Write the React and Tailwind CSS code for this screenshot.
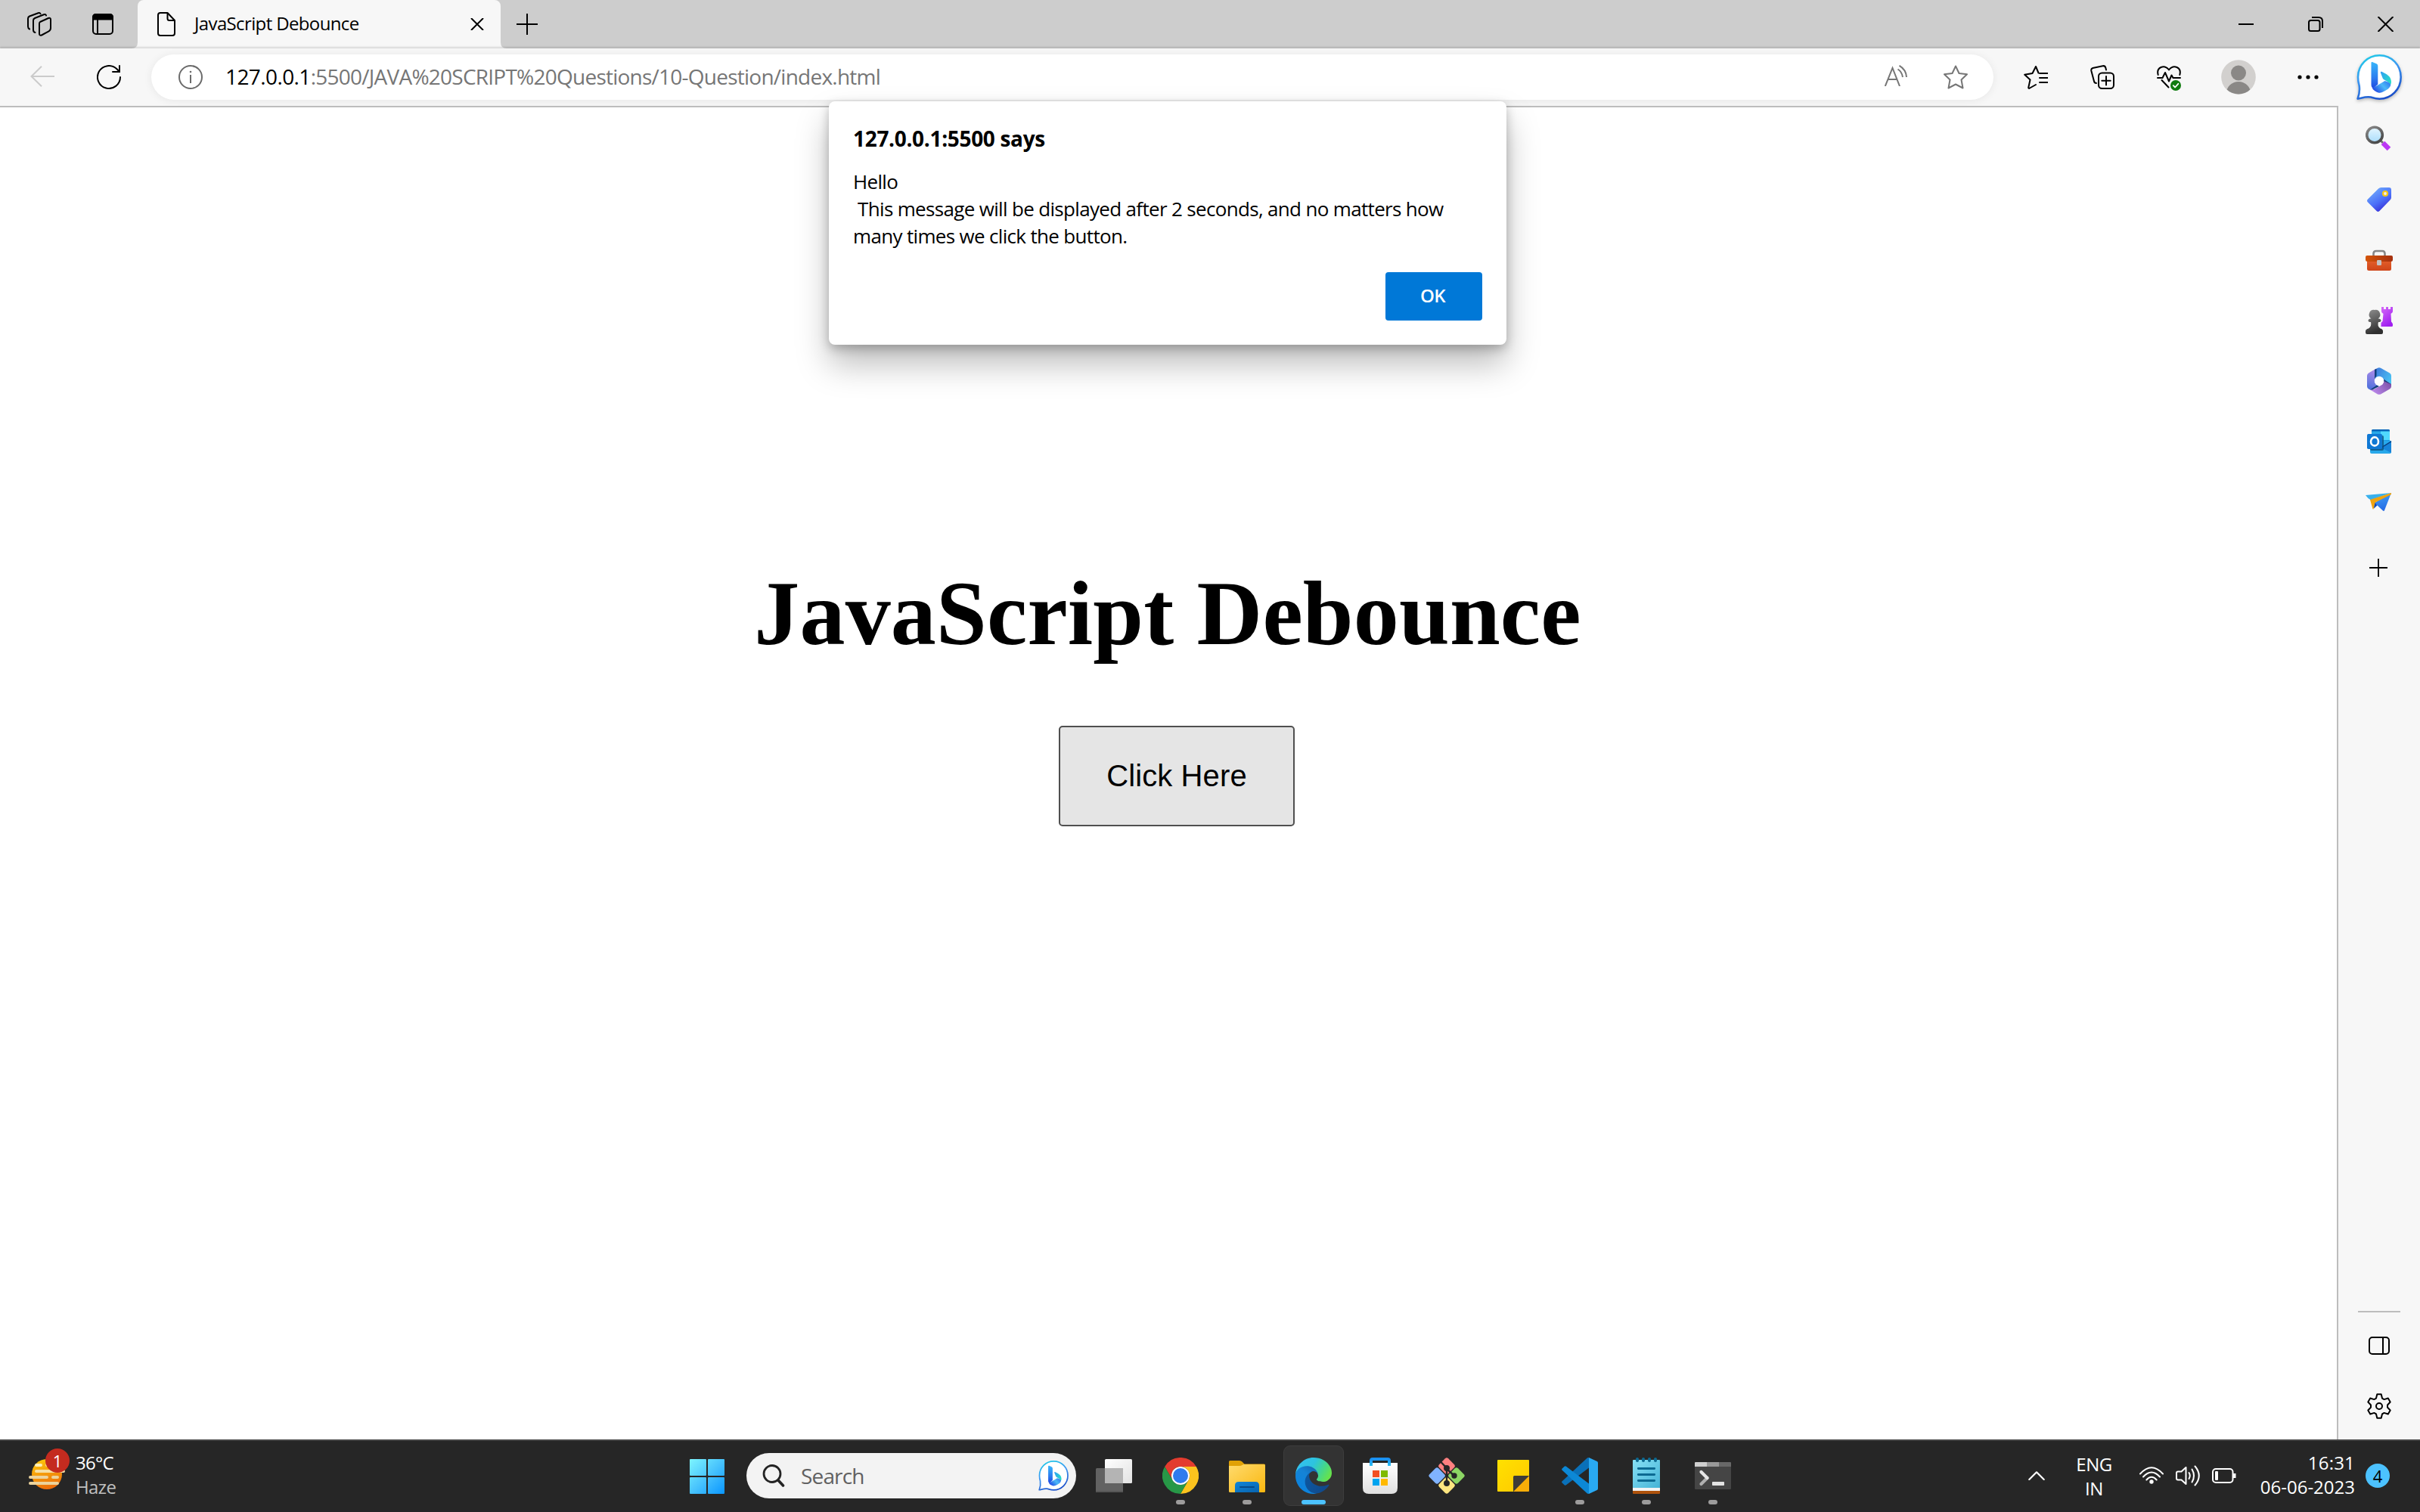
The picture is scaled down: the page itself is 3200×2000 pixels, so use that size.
const UI = "font-['Open_Sans',sans-serif]";

/* ---------- shared logo ---------- */
function BingLogo({ id, className }) {
  return (
    <svg viewBox="0 0 60 62" className={className}>
      <defs>
        <linearGradient id={`${id}-ring`} x1="0.2" y1="0" x2="0.6" y2="1">
          <stop offset="0" stopColor="#1fcbe8" />
          <stop offset="0.45" stopColor="#3d97f2" />
          <stop offset="1" stopColor="#1a4fc9" />
        </linearGradient>
        <linearGradient id={`${id}-stem`} x1="0" y1="0" x2="0" y2="1">
          <stop offset="0" stopColor="#37b5fa" />
          <stop offset="0.6" stopColor="#2b7cf0" />
          <stop offset="1" stopColor="#1f48e0" />
        </linearGradient>
        <linearGradient id={`${id}-leaf`} x1="0" y1="0" x2="1" y2="0.6">
          <stop offset="0" stopColor="#2f9df5" />
          <stop offset="1" stopColor="#27dcc8" />
        </linearGradient>
        <linearGradient id={`${id}-foot`} x1="0" y1="0.6" x2="1" y2="0">
          <stop offset="0" stopColor="#2350e6" />
          <stop offset="0.5" stopColor="#4cb9f7" />
          <stop offset="1" stopColor="#2a6bf0" />
        </linearGradient>
      </defs>
      <path
        d="M1.6 58.6 C4 52 4.4 46 3.6 41 C2.4 37 2 33.500 2 30 C2 14 14.500 1.300 30.500 1.300 S58.700 14 58.700 30 S46 58.700 30.500 58.700 C26 58.700 22.500 57.600 19 56.600 C13 55.300 7.500 57.500 1.600 58.600 Z"
        fill="#fff"
        stroke={`url(#${id}-ring)`}
        strokeWidth="2.600"
        strokeLinejoin="round"
      />
      <path d="M19.500 11.500 C19.500 10.300 20.300 9.800 21.500 10.300 L26.300 12.300 C27.700 13 28.300 14 28.300 15.800 V39.500 L22 45 C20.300 44 19.500 42.300 19.500 40 Z" fill={`url(#${id}-stem)`} />
      <path d="M32 24.500 C31.500 23 32.300 22.300 33.800 23 L39 25.700 C43.500 28.500 46 31.500 46 36.500 C46 38 45.500 39.500 44.500 40.500 C43.500 37.500 41.500 36 38.500 34.500 L36.300 33.300 C35.300 32.700 34.900 32 34.500 31 Z" fill={`url(#${id}-leaf)`} />
      <path d="M21 44.500 L28 40.800 L37.500 35 C41.500 36 44.300 37.800 45.300 40 C44.500 44 41.500 46 38 48 L34 50 C31 51.200 28.500 50.800 26 49.200 C23.500 47.800 21.500 46.500 21 44.500 Z" fill={`url(#${id}-foot)`} />
    </svg>
  );
}

/* ---------- tab strip ---------- */
function TabStrip() {
  return (
    <div className="flex h-16 items-center bg-[#cdcdcd] text-black">
      <svg className="ml-[36px] h-8 w-8 shrink-0" viewBox="0 0 32 32" fill="none" stroke="#000" strokeWidth="2" strokeLinejoin="round" strokeLinecap="round">
        <path d="M17 13 L28 8 Q31 7 31 10 V21 Q31 24 28.500 25.300 L19 30.500 Q16 31.500 16 28.500 V15.500 Q16 13.700 17 13 Z" />
        <path d="M10.500 27 Q8 26.500 8 23.500 V11 Q8 9 10 8 L22 3.200 Q24.500 2.500 25 4.500" />
        <path d="M3 22.500 Q1 21.500 1 19 V8.500 Q1 6.500 3 5.500 L14.500 1.200 Q17 0.500 17.500 2.300" />
      </svg>
      <svg className="ml-[54px] h-7 w-7 shrink-0" viewBox="0 0 28 28" fill="none" stroke="#000" strokeWidth="2">
        <rect x="1" y="1" width="26" height="26" rx="4" />
        <path d="M1 7.500 V5 Q1 1 5 1 H23 Q27 1 27 5 V7.500 Z" fill="#000" />
        <path d="M7 7 V27" />
      </svg>
      <svg className="ml-6 h-2 w-2 shrink-0 self-end" viewBox="0 0 8 8">
        <path d="M0 8 Q8 8 8 0 V8 Z" fill="#f7f7f7" />
      </svg>
      <div className="flex h-16 w-[480px] items-center rounded-t-[8px] bg-[#f7f7f7]">
        <svg className="ml-[26px] h-8 w-6 shrink-0" viewBox="0 0 24 32" fill="none" stroke="#000" strokeWidth="2" strokeLinejoin="round">
          <path d="M4 1 H13.500 L23 11 V28 Q23 31 20 31 H4 Q1 31 1 28 V4 Q1 1 4 1 Z" />
          <path d="M13.500 1 V8.500 Q13.500 11 16 11 H23" />
        </svg>
        <span className="ml-[25px] pb-[2px] text-[24px] tracking-[-0.63px] whitespace-nowrap">JavaScript Debounce</span>
        <svg className="mr-[22px] ml-auto h-4 w-[18px] shrink-0" viewBox="0 0 18 16" stroke="#000" strokeWidth="2">
          <path d="M1 0 L17 16 M17 0 L1 16" />
        </svg>
      </div>
      <svg className="h-2 w-2 shrink-0 self-end" viewBox="0 0 8 8">
        <path d="M8 8 Q0 8 0 0 V8 Z" fill="#f7f7f7" />
      </svg>
      <svg className="ml-[13px] h-7 w-7 shrink-0" viewBox="0 0 28 28" stroke="#000" strokeWidth="2">
        <path d="M14 0 V28 M0 14 H28" />
      </svg>
      <svg className="ml-auto h-5 w-5" viewBox="0 0 20 20">
        <path d="M0 10 H20" stroke="#000" strokeWidth="2" />
      </svg>
      <svg className="ml-[72px] h-5 w-5" viewBox="0 0 20 20" fill="none" stroke="#000" strokeWidth="2">
        <rect x="1" y="5" width="14.500" height="14" rx="2.500" />
        <path d="M5 1 H14 Q19 1 19 6 V15" />
      </svg>
      <svg className="mr-[35px] ml-[72px] h-5 w-[21px]" viewBox="0 0 21 20" stroke="#000" strokeWidth="2">
        <path d="M0.500 0 L20.500 20 M20.500 0 L0.500 20" />
      </svg>
    </div>
  );
}

/* ---------- toolbar ---------- */
function Toolbar() {
  return (
    <div className="flex h-[76px] items-center bg-[#f7f7f7] shadow-[0_-2px_2px_rgba(0,0,0,0.12)]">
      <svg className="ml-[40px] h-7 w-8 shrink-0 -translate-y-px" viewBox="0 0 32 28" fill="none" stroke="#cbcbcb" strokeWidth="2">
        <path d="M15 0.700 L1.500 14 L15 27.300 M1.500 14 H32" />
      </svg>
      <svg className="ml-[56px] h-8 w-8 shrink-0" viewBox="0 0 32 32" fill="none" stroke="#000" strokeWidth="2" strokeLinecap="round">
        <path d="M31 16 A15 15 0 1 1 26.500 5.300 L30 9" />
        <path d="M30 1 V9 H21" />
      </svg>
      <div className="ml-[40px] flex h-[60px] w-[2436px] shrink-0 items-center rounded-full bg-white shadow-[0_1px_12px_rgba(0,0,0,0.07)]">
        <svg className="ml-[36px] h-8 w-8 shrink-0" viewBox="0 0 32 32" fill="none" stroke="#6b6b6b" strokeWidth="2">
          <circle cx="16" cy="16" r="15" />
          <path d="M16 13 V24" />
          <circle cx="16" cy="9" r="1.300" fill="#6b6b6b" stroke="none" />
        </svg>
        <span className="ml-[30px] pb-[2px] text-[28px] whitespace-nowrap text-[#767676]">
          <span className="tracking-[-0.6px] text-black">127.0.0.1</span>
          <span className="tracking-[-0.76px]">:5500/JAVA%20SCRIPT%20Questions/10-Question/index.html</span>
        </span>
        <svg className="mr-[48px] ml-auto h-7 w-[30px] shrink-0 -translate-y-[2px]" viewBox="0 0 30 28" fill="none" stroke="#767676" strokeWidth="2">
          <path d="M0.800 28 L10.500 4 L20 28 M4.500 19 H16.500" />
          <path d="M17.500 5.500 Q23 9 24 16" />
          <path d="M19.500 0.800 Q28.500 6 29 16" />
        </svg>
        <svg className="mr-[34px] h-8 w-8 shrink-0" viewBox="0 0 32 32" fill="none" stroke="#767676" strokeWidth="2" strokeLinejoin="round">
          <path d="M16 1.500 L20.500 11 L31 12.300 L23.500 19.500 L25.500 30.500 L16 25.500 L6.500 30.500 L8.500 19.500 L1 12.300 L11.500 11 Z" />
        </svg>
      </div>
      <svg className="ml-[40px] h-8 w-8 shrink-0" viewBox="0 0 32 32" fill="none" stroke="#000" strokeWidth="2" strokeLinejoin="round" strokeLinecap="round">
        <path d="M19.500 10.500 L16 2 L11.500 11 L1.200 12.800 L8.500 19.500 L6.200 30 Q6.500 31.500 8 30.500 L16 26" />
        <path d="M21 11 H31.500 M21 17 H31.500 M21 23 H31.500" />
      </svg>
      <svg className="ml-[56px] h-8 w-8 shrink-0" viewBox="0 0 32 32" fill="none" stroke="#000" strokeWidth="2" strokeLinecap="round">
        <path d="M8 24 Q5.500 24 5 21.500 L1.300 7.500 Q0.800 4.800 3.300 4 L16.500 1.200 Q19.500 0.700 20.300 3.500 L21 6.500" />
        <rect x="11" y="10.500" width="20" height="20.500" rx="4.500" />
        <path d="M21 15 V26.500 M15.300 20.700 H26.700" />
      </svg>
      <svg className="ml-[56px] h-[34px] w-8 shrink-0 translate-y-[2px]" viewBox="0 0 32 34" fill="none" stroke="#000" strokeWidth="2" strokeLinecap="round" strokeLinejoin="round">
        <path d="M1.700 12 Q-0.300 4.500 5.500 2 Q11.500 -0.300 16 5.500 Q20.500 -0.300 26.500 2 Q32.300 4.500 30.300 12" />
        <path d="M1 16 H7.500 L11 9 L16 20.500 L19.500 12.500 L21.500 16 H31" />
        <path d="M6.500 19 L15.500 28.500" />
        <circle cx="25" cy="26" r="7" fill="#107c10" stroke="none" />
        <path d="M21.800 26.200 L24.200 28.500 L28.300 23.800" stroke="#fff" strokeWidth="1.800" />
      </svg>
      <svg className="ml-[53px] h-[46px] w-[46px] shrink-0" viewBox="0 0 46 46">
        <clipPath id="avatar-clip"><circle cx="23" cy="23" r="22.500" /></clipPath>
        <circle cx="23" cy="23" r="22.800" fill="#d2d0ce" />
        <g clipPath="url(#avatar-clip)" fill="#8a8886">
          <circle cx="23" cy="17.500" r="10" />
          <circle cx="23" cy="45.500" r="16.500" />
        </g>
      </svg>
      <svg className="ml-[55px] h-2 w-7 shrink-0" viewBox="0 0 28 8" fill="#000">
        <circle cx="3" cy="4" r="2.600" />
        <circle cx="14" cy="4" r="2.600" />
        <circle cx="25" cy="4" r="2.600" />
      </svg>
      <BingLogo id="bing-bar" className="ml-[50px] h-[62px] w-[60px] shrink-0 translate-y-px drop-shadow-[0_2px_2px_rgba(0,0,0,0.25)]" />
    </div>
  );
}

/* ---------- sidebar ---------- */
const ICON = "h-9 w-9";

function SearchColor() {
  return (
    <svg className={ICON} viewBox="0 0 36 36">
      <defs>
        <linearGradient id="sc-l" x1="0" y1="0" x2="0" y2="1"><stop offset="0" stopColor="#e6f6ff" /><stop offset="1" stopColor="#a9dcfb" /></linearGradient>
        <linearGradient id="sc-r" x1="0" y1="0" x2="0.600" y2="1"><stop offset="0" stopColor="#8a8a8a" /><stop offset="1" stopColor="#4a4a4a" /></linearGradient>
      </defs>
      <path d="M19 19 L23 23" stroke="#707070" strokeWidth="3" />
      <path d="M23 23 L31 31" stroke="#bb38f4" strokeWidth="6.500" />
      <circle cx="12" cy="12.500" r="10.300" fill="url(#sc-l)" stroke="url(#sc-r)" strokeWidth="3.600" />
    </svg>
  );
}
function TagColor() {
  return (
    <svg className={ICON} viewBox="0 0 36 36">
      <defs>
        <linearGradient id="tg" x1="0.200" y1="0.100" x2="0.700" y2="0.900"><stop offset="0" stopColor="#6fa8fb" /><stop offset="0.600" stopColor="#4b6ff8" /><stop offset="1" stopColor="#3a35dc" /></linearGradient>
      </defs>
      <path d="M17 3.500 Q18.500 2 20.500 2 H31 Q34 2 34 5 V15 Q34 17 32.500 18.500 L18.500 33 Q16.500 35 14.500 33 L3 21.500 Q1 19.500 3 17.500 Z" fill="url(#tg)" />
      <circle cx="26" cy="10" r="3" fill="#efe9f5" stroke="#f7c815" strokeWidth="2.200" />
    </svg>
  );
}
function ToolboxColor() {
  return (
    <svg className={ICON} viewBox="0 0 36 36">
      <defs>
        <linearGradient id="tb" x1="0" y1="0" x2="0" y2="1"><stop offset="0" stopColor="#e35f2a" /><stop offset="1" stopColor="#cf4519" /></linearGradient>
        <linearGradient id="tbl" x1="0" y1="0" x2="1" y2="0"><stop offset="0" stopColor="#d4550a" /><stop offset="1" stopColor="#a5300e" /></linearGradient>
      </defs>
      <path d="M10.500 13 V9.500 Q10.500 6 14 6 H22 Q25.500 6 25.500 9.500 V13" fill="none" stroke="#868686" strokeWidth="2.600" />
      <path d="M2 18 H34 V29.500 Q34 32 31.500 32 H4.500 Q2 32 2 29.500 Z" fill="url(#tb)" />
      <path d="M0 14 Q0 12 2 12 H34 Q36 12 36 14 V18 Q36 20 33.500 20 H2.500 Q0 20 0 18 Z" fill="url(#tbl)" />
      <rect x="15" y="18" width="6" height="7" rx="1.200" fill="#c2c2c2" />
    </svg>
  );
}
function ChessColor() {
  return (
    <svg className={ICON} viewBox="0 0 36 36">
      <defs>
        <linearGradient id="pw" x1="0" y1="0" x2="0.300" y2="1"><stop offset="0" stopColor="#909090" /><stop offset="1" stopColor="#303030" /></linearGradient>
        <linearGradient id="rk" x1="0" y1="0" x2="0.500" y2="1"><stop offset="0" stopColor="#d66bf8" /><stop offset="1" stopColor="#a020f0" /></linearGradient>
      </defs>
      <path d="M21 0 H24 V3 H27 V0 H30 V3 H33 V0 H36 V6 Q36 7.500 33.500 9 L34 19.500 Q36 21.500 36 23 V24.500 Q36 26 34.500 26 H20.500 V21 L22.500 19 L23.500 9 Q21 7.500 21 6 Z" fill="url(#rk)" />
      <path d="M12 4 A6.300 6.300 0 0 1 16.500 15.500 H18 Q20.500 16 20.500 18 Q20.500 20 17 20 Q15 25 19.500 28.500 Q23 29.500 23 32 V34 Q23 36 21 36 H2 Q0 36 0 34 V32 Q0 29.500 4 28.500 Q8.500 25 7 20 Q3.500 20 3.500 18 Q3.500 16 6 15.500 H7.500 A6.300 6.300 0 0 1 12 4 Z" fill="url(#pw)" />
    </svg>
  );
}
function M365Color() {
  return (
    <svg className={ICON} viewBox="0 0 36 36">
      <defs>
        <linearGradient id="m1" x1="0.500" y1="0" x2="0.300" y2="1"><stop offset="0" stopColor="#b08ce8" /><stop offset="1" stopColor="#4a6fdc" /></linearGradient>
        <linearGradient id="m2" x1="0" y1="0.200" x2="1" y2="0.800"><stop offset="0" stopColor="#3f7bdc" /><stop offset="1" stopColor="#48c4f4" /></linearGradient>
        <linearGradient id="m3" x1="0" y1="0.800" x2="1" y2="0.200"><stop offset="0" stopColor="#c08df0" /><stop offset="1" stopColor="#7a4fa5" /></linearGradient>
      </defs>
      <path d="M14 1.500 L4 7.500 Q2 8.700 2 11 V25 Q2 27.500 4 28.500 L7 30 L17 24 L12 20 V6 Z" fill="url(#m1)" />
      <path d="M12 18 V3 L16 0.700 Q18 -0.300 20 0.700 L32 7.500 Q34 8.700 34 11 V22.500 L22.500 15 L18 12 Z" fill="url(#m2)" />
      <path d="M34 22 V25 Q34 27.500 32 28.600 L20 35.400 Q18 36.300 16 35.400 L6 29.500 L12 28.500 L20 24 L24 20 V16 Z" fill="url(#m3)" />
      <path d="M12 3 L14.500 1.700 V11 L12 15 Z M34 22.500 L24 15.500 V18 Z M6 29.500 L15 23.500 L18 25 L9 29.500 Z" fill="#123f7c" />
      <circle cx="18" cy="18" r="6.200" fill="#fff" />
    </svg>
  );
}
function OutlookColor() {
  return (
    <svg className={ICON} viewBox="0 0 36 36">
      <path d="M8 4 Q8 2 10 2 H30 Q32 2 32 4 V20 H8 Z" fill="#1490df" />
      <path d="M8 4 Q8 2 10 2 H30 Q32 2 32 4 V5 H8 Z" fill="#0364b8" />
      <path d="M20 4.500 H32 V16 H20 Z" fill="#50d9ff" />
      <path d="M8 4.500 H20 V10 H8 Z" fill="#28a8ea" />
      <path d="M6 16 H20 L34 17 V32 Q34 34 32 34 H8 Q6 34 6 32 Z" fill="#28a8ea" />
      <path d="M34 17 L20 26 L34 33 Z" fill="#1784d9" />
      <path d="M34 18 L21 26" stroke="#0a3a7a" strokeWidth="1.400" />
      <rect x="6" y="10" width="18" height="20" rx="2" fill="#0b4f7d" opacity="0.800" />
      <rect x="2" y="8" width="20" height="20" rx="1.800" fill="#0f78d4" />
      <ellipse cx="12" cy="18" rx="5" ry="5.600" fill="none" stroke="#fff" strokeWidth="2.600" />
    </svg>
  );
}
function PlaneColor() {
  return (
    <svg className={ICON} viewBox="0 0 36 36">
      <defs>
        <linearGradient id="pl" x1="0.400" y1="0" x2="0.600" y2="1"><stop offset="0" stopColor="#3f9ff5" /><stop offset="1" stopColor="#2468e4" /></linearGradient>
      </defs>
      <path d="M0 9 L34 6 L7 15.500 Q3 13.500 0 9 Z" fill="#39b0ec" />
      <path d="M34 6 L12 19 L11 26.500 L15.500 22.500 L23 29.500 Q24.500 30.500 25 29 Z" fill="url(#pl)" />
      <path d="M6 15 L34 6 V8 L13 18.500 L10.500 27.500 H9.500 Z" fill="#f0a30f" />
      <path d="M12.500 19 L11 26.500 L15 22.500 Z" fill="#1546ae" />
    </svg>
  );
}

function Sidebar() {
  const apps = [SearchColor, TagColor, ToolboxColor, ChessColor, M365Color, OutlookColor, PlaneColor];
  return (
    <aside className="flex w-[108px] shrink-0 flex-col items-center bg-[#f7f7f7] py-1">
      {apps.map((App, i) => (
        <div key={i} className="flex h-20 items-center justify-center">
          <App />
        </div>
      ))}
      <div className="mt-[7px] flex h-20 items-center justify-center">
        <svg className="mr-[2px] h-6 w-6" viewBox="0 0 24 24" stroke="#000" strokeWidth="1.800">
          <path d="M12 0 V24 M0 12 H24" />
        </svg>
      </div>
      <div className="mt-auto mb-1 h-[2px] w-14 bg-[#bdbdbd]" />
      <div className="flex h-20 items-center justify-center">
        <svg className="h-6 w-7" viewBox="0 0 28 24" fill="none" stroke="#000" strokeWidth="2">
          <rect x="1" y="1" width="26" height="22" rx="4" />
          <path d="M19 1 V23" />
        </svg>
      </div>
      <div className="flex h-20 items-center justify-center">
        <svg className="h-[34px] w-8" viewBox="0 0 32 34" fill="none" stroke="#000" strokeWidth="2" strokeLinejoin="round">
          <path d="M13.300 1.200 H18.700 L20 6.600 L22.600 8.100 L27.800 6.500 L30.700 11.500 L27 15.500 V18.500 L30.700 22.500 L27.800 27.500 L22.600 25.900 L20 27.400 L18.700 32.800 H13.300 L12 27.400 L9.400 25.900 L4.200 27.500 L1.300 22.500 L5 18.500 V15.500 L1.300 11.500 L4.200 6.500 L9.400 8.100 L12 6.600 Z" />
          <circle cx="16" cy="17" r="4" />
        </svg>
      </div>
    </aside>
  );
}

/* ---------- page ---------- */
function Page() {
  return (
    <main className="flex flex-1 flex-col items-center border-t-2 border-r-2 border-[#bdbdbd] bg-white">
      <h1 className="mt-[610px] mr-[2px] font-['Liberation_Serif',serif] text-[120px] leading-[120px] font-bold tracking-[0.18px] text-black">
        JavaScript Debounce
      </h1>
      <button className="mt-[88px] ml-[22px] h-[133px] w-[312px] rounded-[5px] border-2 border-[#4f4f4f] bg-[#e5e5e5] pb-[2px] font-['Liberation_Sans',sans-serif] text-[40px] tracking-[0.1px] text-black">
        Click Here
      </button>
    </main>
  );
}

function AlertDialog() {
  return (
    <div className="absolute top-[134px] left-[1096px] flex h-[322px] w-[896px] flex-col rounded-[8px] bg-white px-8 pt-[31px] text-black shadow-[0_26px_44px_rgba(0,0,0,0.26),0_5px_14px_rgba(0,0,0,0.24)]">
      <div className="text-[28px] leading-9 font-bold tracking-[-0.32px]">127.0.0.1:5500 says</div>
      <p className="mt-[21px] text-[26px] leading-9 tracking-[-0.67px] whitespace-pre">
        {"Hello\n This message will be displayed after 2 seconds, and no matters how\nmany times we click the button."}
      </p>
      <button className="mt-[30px] h-16 w-32 self-end rounded-[4px] bg-[#0078d7] pr-[3px] pb-[2px] text-[24px] font-semibold tracking-[-0.6px] text-white">OK</button>
    </div>
  );
}

/* ---------- taskbar ---------- */
function WeatherIcon() {
  return (
    <svg className="h-[60px] w-14" viewBox="0 0 56 60">
      <defs>
        <linearGradient id="sun" x1="0.300" y1="0" x2="0.600" y2="1"><stop offset="0" stopColor="#fcc60c" /><stop offset="1" stopColor="#ec6a0a" /></linearGradient>
      </defs>
      <circle cx="24" cy="36" r="20" fill="url(#sun)" />
      <g stroke="#ecd39c" strokeWidth="4" strokeLinecap="round">
        <path d="M10 24 H16" stroke="#fdeeb8" />
        <path d="M24 24 H30 M10 32 H46" stroke="#f5dfa4" />
        <path d="M2 40 H24 M32 40 H38 M2 48 H38" />
      </g>
    </svg>
  );
}
function StartIcon() {
  return (
    <svg className="ml-[912px] h-[46px] w-[46px] shrink-0 translate-y-px" viewBox="0 0 46 46">
      <defs>
        <linearGradient id="win" gradientUnits="userSpaceOnUse" x1="0" y1="0" x2="46" y2="46"><stop offset="0" stopColor="#7df5ff" /><stop offset="0.500" stopColor="#49c4fd" /><stop offset="1" stopColor="#0a96ff" /></linearGradient>
      </defs>
      <g fill="url(#win)">
        <rect width="22" height="22" rx="1" />
        <rect x="24" width="22" height="22" rx="1" />
        <rect y="24" width="22" height="22" rx="1" />
        <rect x="24" y="24" width="22" height="22" rx="1" />
      </g>
    </svg>
  );
}
const APP_ICON = "h-12 w-12";
function TaskView() {
  return (
    <svg className={APP_ICON} viewBox="0 0 48 48">
      <defs>
        <linearGradient id="tv1" x1="0" y1="0" x2="1" y2="1"><stop offset="0" stopColor="#fff" /><stop offset="1" stopColor="#e2e2e2" /></linearGradient>
      </defs>
      <rect x="12" y="2" width="36" height="32" rx="1.500" fill="url(#tv1)" />
      <rect x="0" y="14" width="36" height="32" rx="1.500" fill="#626262" />
      <path d="M12 14 H36 V34 H12 Z" fill="#b4b4b4" />
      <rect x="0" y="44" width="36" height="2" fill="#565656" />
    </svg>
  );
}
function Chrome() {
  return (
    <svg className={APP_ICON} viewBox="0 0 48 48">
      <path d="M3.200 12 A24 24 0 0 1 44.800 12 H24 A12 12 0 0 0 13.600 30 Z" fill="#e33b2e" />
      <path d="M44.800 12 A24 24 0 0 1 24 48 L34.400 30 A12 12 0 0 0 24 12 Z" fill="#fcc31e" />
      <path d="M24 48 A24 24 0 0 1 3.200 12 L13.600 30 A12 12 0 0 0 34.400 30 Z" fill="#279847" />
      <circle cx="24" cy="24" r="12" fill="#fff" />
      <circle cx="24" cy="24" r="10" fill="#2f7bee" />
    </svg>
  );
}
function Explorer() {
  return (
    <svg className={APP_ICON} viewBox="0 0 48 48">
      <defs>
        <linearGradient id="fo" x1="0" y1="0" x2="1" y2="1"><stop offset="0" stopColor="#ffdb6e" /><stop offset="1" stopColor="#fab70f" /></linearGradient>
        <linearGradient id="fb" x1="0" y1="0" x2="1" y2="1"><stop offset="0" stopColor="#1086d8" /><stop offset="1" stopColor="#0863ae" /></linearGradient>
      </defs>
      <path d="M0 5.500 Q0 4 1.500 4 H14 Q16 4 17.500 5.500 L20.500 8.500 H46.500 Q48 8.500 48 10 V20 H0 Z" fill="#e0a106" />
      <path d="M0 11 H14 Q16 11 18 9.700 L19.500 9 H46.500 Q48 9 48 10.500 V44.500 Q48 46 46.500 46 H1.500 Q0 46 0 44.500 Z" fill="url(#fo)" />
      <path d="M8 46 V37 Q8 32 13 32 H35 Q40 32 40 37 V46 Z" fill="url(#fb)" />
      <path d="M15 39 H33" stroke="#064a87" strokeWidth="2" strokeLinecap="round" />
    </svg>
  );
}
function Edge() {
  return (
    <svg className={APP_ICON} viewBox="0 0 256 256">
      <defs>
        <linearGradient id="e1" x1="0" y1="0" x2="1" y2="0.300"><stop offset="0" stopColor="#0c59a4" /><stop offset="1" stopColor="#114a8b" /></linearGradient>
        <linearGradient id="e2" x1="0.900" y1="0.100" x2="0.300" y2="1"><stop offset="0" stopColor="#1565ae" /><stop offset="0.400" stopColor="#1583d6" /><stop offset="1" stopColor="#0a84e0" /></linearGradient>
        <linearGradient id="e3" x1="0" y1="0.200" x2="1" y2="0.600"><stop offset="0" stopColor="#35c1f1" /><stop offset="0.450" stopColor="#2dc3df" /><stop offset="0.750" stopColor="#44d78b" /><stop offset="1" stopColor="#66e24c" /></linearGradient>
      </defs>
      <path fill="url(#e1)" d="M231.100 190.500c-3.400 1.800-6.900 3.400-10.500 4.700-11.500 4.300-23.600 6.500-35.900 6.500-47.300 0-88.500-32.500-88.500-74.300.1-11.400 6.400-21.900 16.400-27.300-42.800 1.800-53.800 46.400-53.800 72.500 0 73.900 68.100 81.400 82.800 81.400 7.900 0 19.800-2.300 27-4.600l1.300-.4c27.600-9.500 51-28.100 66.600-52.800 1.200-1.900.6-4.300-1.200-5.500-1.300-.8-2.900-.9-4.200-.2z" />
      <path fill="url(#e2)" d="M105.700 241.400c-8.900-5.500-16.600-12.800-22.700-21.300-26.300-36-18.400-86.500 17.600-112.800 3.800-2.700 7.700-5.200 11.900-7.200 3.100-1.500 8.400-4.100 15.500-4 10.100.1 19.600 4.900 25.700 13 4 5.400 6.300 11.900 6.400 18.700 0-.2 24.500-79.600-80-79.600-43.900 0-80 41.700-80 78.200-.2 19.300 4 38.500 12.100 56 27.600 58.800 94.800 87.600 156.400 67.100-21.100 6.600-44.100 3.700-62.900-8.100z" />
      <path fill="url(#e3)" d="M152.300 148.900c-.8 1-3.300 2.500-3.300 5.700 0 2.600 1.700 5.100 4.700 7.200 14.400 10 41.500 8.700 41.600 8.700 10.700 0 21.100-2.900 30.300-8.300 18.800-11 30.400-31.100 30.400-52.900.3-22.400-8-37.300-11.300-43.900C223.500 23.900 177.700 0 128 0 58 0 1 56.200 0 126.200c.5-36.500 36.800-66 80-66 3.500 0 23.500.3 42 10.100 16.300 8.600 24.900 18.900 30.800 29.200 6.200 10.700 7.300 24.100 7.300 29.500s-2.700 13.300-7.800 19.900z" />
    </svg>
  );
}
function Store() {
  return (
    <svg className={APP_ICON} viewBox="0 0 48 48">
      <defs>
        <linearGradient id="st" x1="0" y1="0" x2="0" y2="1"><stop offset="0" stopColor="#fff" /><stop offset="1" stopColor="#e0e0e0" /></linearGradient>
        <linearGradient id="sth" x1="0" y1="0" x2="0" y2="1"><stop offset="0" stopColor="#1a8ff0" /><stop offset="1" stopColor="#2bc0f5" /></linearGradient>
      </defs>
      <path d="M1 7 H47 V40 Q47 48 39 48 H9 Q1 48 1 40 Z" fill="url(#st)" />
      <path d="M12 11 V4 Q12 2 14 2 H34 Q36 2 36 4 V11" fill="none" stroke="url(#sth)" strokeWidth="4" />
      <rect x="14" y="17" width="9" height="9" fill="#f25022" />
      <rect x="25" y="17" width="9" height="9" fill="#7fba00" />
      <rect x="14" y="28" width="9" height="9" fill="#00a4ef" />
      <rect x="25" y="28" width="9" height="9" fill="#ffb900" />
    </svg>
  );
}
function Git() {
  return (
    <svg className={APP_ICON} viewBox="0 0 48 48">
      <g transform="translate(24 24) rotate(45)">
        <rect x="-17.500" y="-17.500" width="16.800" height="16.800" rx="3" fill="#ff8080" />
        <rect x="0.700" y="-17.500" width="16.800" height="16.800" rx="3" fill="#8cd564" />
        <rect x="-17.500" y="0.700" width="16.800" height="16.800" rx="3" fill="#80b3ff" />
        <rect x="0.700" y="0.700" width="16.800" height="16.800" rx="3" fill="#ffe680" />
      </g>
      <g stroke="#262626" strokeWidth="2.400" fill="#262626">
        <path d="M16 5.500 L24 14 V34 M24 15 L34 24" fill="none" />
        <circle cx="24" cy="14" r="2.800" />
        <circle cx="34" cy="24" r="2.500" />
        <circle cx="24" cy="34" r="2.800" />
      </g>
    </svg>
  );
}
function Sticky() {
  return (
    <svg className={APP_ICON} viewBox="0 0 48 48">
      <defs>
        <linearGradient id="sn" x1="0" y1="0" x2="1" y2="1"><stop offset="0" stopColor="#ffe100" /><stop offset="1" stopColor="#ffc800" /></linearGradient>
      </defs>
      <path d="M4 3 H44 Q45 3 45 4 V24 L24 45 H4 Q3 45 3 44 V4 Q3 3 4 3 Z" fill="url(#sn)" />
      <path d="M45 24 V44 Q45 45 44 45 H24 Z" fill="#f9ad08" />
      <path d="M24 25.500 Q24 24 25.500 24 H45 L24 45 Z" fill="#3d3a38" />
    </svg>
  );
}
function Code() {
  return (
    <svg className={APP_ICON} viewBox="0 0 48 48">
      <path d="M33.500 0.800 Q34.500 -0.200 36 0.200 V13.500 L6 36.300 Q4.800 37.200 3.600 36.200 L0.700 33.600 Q-0.500 32.400 0.700 31.200 Z" fill="#0a70b8" />
      <path d="M33.500 47.200 Q34.500 48.200 36 47.800 V34.500 L6 11.700 Q4.800 10.800 3.600 11.800 L0.700 14.400 Q-0.500 15.600 0.700 16.800 Z" fill="#0c88d6" />
      <path d="M36 0 L46.800 5 Q48 5.700 48 7 V41 Q48 42.300 46.800 43 L36 48 Z" fill="#29a9f2" />
    </svg>
  );
}
function Notepad() {
  return (
    <svg className={APP_ICON} viewBox="0 0 48 48">
      <defs>
        <linearGradient id="np" x1="0" y1="0" x2="1" y2="1"><stop offset="0" stopColor="#87e1f5" /><stop offset="1" stopColor="#45b3d6" /></linearGradient>
      </defs>
      <path d="M6 42 H42 V47 Q42 48 41 48 H7 Q6 48 6 47 Z" fill="#ae520c" />
      <rect x="6" y="38" width="36" height="6" fill="#f2f2f2" />
      <path d="M6 4 Q6 3 7 3 H41 Q42 3 42 4 V40 H6 Z" fill="url(#np)" />
      <path d="M12 2 V4 M20 2 V4 M28 2 V4 M36 2 V4" stroke="#0c6a92" strokeWidth="4" strokeLinecap="round" />
      <path d="M13.300 14.500 H34.700 M13.300 22.500 H34.700 M13.300 30.500 H34.700" stroke="#0c6a92" strokeWidth="2.800" strokeLinecap="round" />
    </svg>
  );
}
function Terminal() {
  return (
    <svg className={APP_ICON} viewBox="0 0 48 48">
      <path d="M0 12 H48 V41 Q48 42 47 42 H1 Q0 42 0 41 Z" fill="#454545" />
      <path d="M1 6 H16 V12 H0 V7 Q0 6 1 6 Z" fill="#cfcfcf" />
      <path d="M16 6 H32 V12 H16 Z" fill="#999" />
      <path d="M32 6 H47 Q48 6 48 7 V12 H32 Z" fill="#686868" />
      <path d="M16.500 27 L8.500 35" stroke="#b0b0b0" strokeWidth="4.200" strokeLinecap="round" />
      <path d="M8.500 19 L16.500 27" stroke="#e6e6e6" strokeWidth="4.200" strokeLinecap="round" />
      <rect x="23" y="32" width="16" height="5" rx="0.800" fill="#e3e3e3" />
    </svg>
  );
}

const TASK_APPS = [
  { Icon: TaskView },
  { Icon: Chrome, running: true },
  { Icon: Explorer, running: true },
  { Icon: Edge, active: true },
  { Icon: Store },
  { Icon: Git },
  { Icon: Sticky },
  { Icon: Code, running: true },
  { Icon: Notepad, running: true },
  { Icon: Terminal, running: true },
];

function TaskApp({ Icon, running, active }) {
  return (
    <div
      className={
        active
          ? "mx-1 flex h-20 w-20 shrink-0 flex-col items-center rounded-[9px] border border-[#3d3d3d] bg-[#333333] pt-[15px]"
          : "mx-1 flex h-20 w-20 shrink-0 flex-col items-center pt-4"
      }
    >
      <Icon />
      {running && <div className="mt-2 h-[6px] w-3 rounded-full bg-[#9d9c9c]" />}
      {active && <div className="mt-2 h-[6px] w-8 rounded-full bg-[#4cc2ff]" />}
    </div>
  );
}

function Taskbar() {
  return (
    <footer className="flex h-24 items-center border-t-2 border-[#454545] bg-[#262626] pb-[2px] text-white">
      <div className="flex w-0 items-center">
        <div className="relative mb-4 ml-[38px] shrink-0 self-start">
          <WeatherIcon />
          <div className="absolute top-[2px] left-[22px] flex h-8 w-8 items-center justify-center rounded-full bg-[#c42b1f] text-[22px] leading-none">1</div>
        </div>
        <div className="ml-[6px] -translate-y-px text-[24px] leading-8 whitespace-nowrap">
          <div className="tracking-[-0.7px]">36°C</div>
          <div className="tracking-[-0.6px] text-[#c0c0c0]">Haze</div>
        </div>
      </div>
      <StartIcon />
      <div className="ml-[29px] flex h-[60px] w-[436px] shrink-0 items-center rounded-full bg-[#f3f3f3]">
        <svg className="ml-[21px] h-[30px] w-[30px] shrink-0" viewBox="0 0 30 30" fill="none" stroke="#242424" strokeLinecap="round">
          <circle cx="13" cy="12.500" r="11" strokeWidth="2.800" />
          <path d="M21 21 L27.500 28" strokeWidth="3.600" />
        </svg>
        <span className="ml-[21px] pb-px text-[28px] tracking-[-0.85px] text-[#616161]">Search</span>
        <BingLogo id="bing-task" className="mr-[10px] ml-auto h-[41px] w-10" />
      </div>
      <div className="ml-[6px] flex shrink-0">
        {TASK_APPS.map((a, i) => (
          <TaskApp key={i} {...a} />
        ))}
      </div>
      <svg className="ml-[373px] h-3 w-[22px] shrink-0" viewBox="0 0 22 12" fill="none" stroke="#fff" strokeWidth="2.200" strokeLinecap="round" strokeLinejoin="round">
        <path d="M1.300 11 L11 1.300 L20.700 11" />
      </svg>
      <div className="ml-[41px] w-12 shrink-0 translate-y-px text-center text-[24px] leading-8 tracking-[-0.5px]">
        <div>ENG</div>
        <div>IN</div>
      </div>
      <svg className="ml-[36px] h-6 w-8 shrink-0" viewBox="0 0 32 24" fill="none" stroke="#fff" strokeWidth="2" strokeLinecap="round">
        <path d="M1 9.500 Q16 -7 31 9.500" />
        <path d="M5 13.500 Q16 1.500 27 13.500" />
        <path d="M9.300 17.500 Q16 10 22.700 17.500" />
        <circle cx="16" cy="20" r="2.700" fill="#fff" stroke="none" />
      </svg>
      <svg className="ml-[16px] h-7 w-8 shrink-0" viewBox="0 0 32 28" fill="none" stroke="#fff" strokeWidth="2" strokeLinecap="round" strokeLinejoin="round">
        <path d="M13.500 3 V25 L7.500 19.500 H3 Q1 19.500 1 17.500 V10.500 Q1 8.500 3 8.500 H7.500 Z" />
        <path d="M17.500 10 Q20 14 17.500 18" />
        <path d="M21.500 5.500 Q26.500 14 21.500 22.500" />
        <path d="M25.500 1.500 Q36 14 25.500 26.500" />
      </svg>
      <svg className="ml-[16px] h-5 w-8 shrink-0" viewBox="0 0 32 20" fill="none" stroke="#fff" strokeWidth="2">
        <rect x="1" y="1" width="26.500" height="18" rx="4" />
        <rect x="4" y="4" width="4" height="12" rx="1" fill="#fff" stroke="none" />
        <path d="M29.500 7 V13" strokeWidth="4" strokeLinecap="butt" />
      </svg>
      <div className="w-[157px] shrink-0 -translate-y-px text-right text-[24px] leading-8">
        <div className="tracking-[0.2px]">16:31</div>
        <div>06-06-2023</div>
      </div>
      <div className="ml-[14px] flex h-8 w-8 shrink-0 items-center justify-center rounded-full bg-[#4cc2ff] text-[22px] leading-none text-black">4</div>
    </footer>
  );
}

export default function App() {
  return (
    <div className={`relative flex h-[2000px] w-[3200px] flex-col overflow-hidden bg-white ${UI}`}>
      <TabStrip />
      <Toolbar />
      <div className="flex flex-1">
        <Page />
        <Sidebar />
      </div>
      <Taskbar />
      <AlertDialog />
    </div>
  );
}
